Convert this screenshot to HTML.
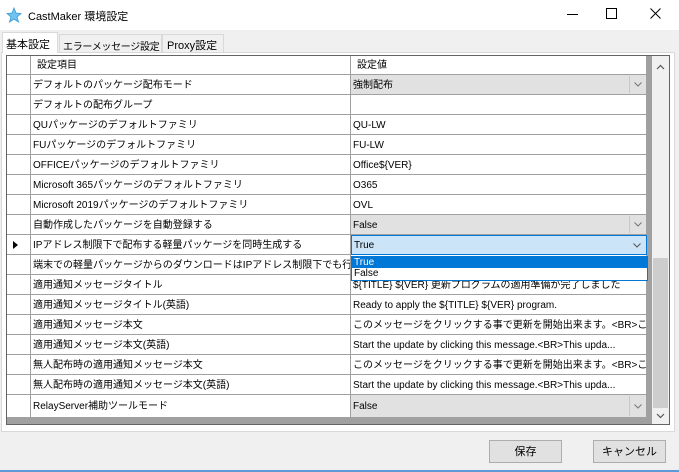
<!DOCTYPE html>
<html><head><meta charset="utf-8"><style>
*{margin:0;padding:0;box-sizing:border-box}
body{width:679px;height:472px;background:#f0f0f0;font-family:"Liberation Sans","Noto Sans CJK JP",sans-serif;font-size:10px;color:#000;position:relative;overflow:hidden}
.a{position:absolute}
.title{left:0;top:0;width:679px;height:30px;background:#fff}
.row{position:absolute;left:31px;width:616px;height:20px}
.c1,.c2{position:absolute;top:0;height:20px;line-height:21px;background:#fff;border-bottom:1px solid #a0a0a0;border-right:1px solid #a0a0a0;padding-left:2px;white-space:nowrap;overflow:hidden}
.c1{left:0;width:320px}
.c2{left:320px;width:296px}
.rh{position:absolute;left:7px;width:24px;height:20px;background:#fff;border-bottom:1px solid #a0a0a0;border-right:1px solid #a0a0a0}
.cb{background:#e1e1e1}
.arr{position:absolute;right:1px;top:1px;width:16px;height:17px;border-left:1px solid #c8c8c8}
.arr svg{position:absolute;left:4px;top:6px}
.btn{position:absolute;top:440px;height:23px;background:#e1e1e1;border:1px solid #adadad;text-align:center;line-height:22px;font-size:11px}
</style></head><body>
<div class="a title"></div>
<svg class="a" style="left:6px;top:7px" width="16" height="16" viewBox="0 0 16 16"><polygon points="8,1 10,6 15,6.5 11,10 12.5,15 8,12 3.5,15 5,10 1,6.5 6,6" fill="#6ec3f0" stroke="#3a9ad8" stroke-width="0.8"/></svg>
<div class="a" style="left:28px;top:8px;font-size:11px">CastMaker 環境設定</div>
<div class="a" style="left:567px;top:14px;width:11px;height:1px;background:#000"></div>
<div class="a" style="left:606px;top:8px;width:11px;height:11px;border:1px solid #000"></div>
<svg class="a" style="left:650px;top:8px" width="11" height="11" viewBox="0 0 11 11"><path d="M0.5 0.5L10.5 10.5M10.5 0.5L0.5 10.5" stroke="#000" stroke-width="1"/></svg>
<div class="a" style="left:1px;top:52px;width:674px;height:380px;background:#fff;border:1px solid #d9d9d9"></div>
<div class="a" style="left:2px;top:32px;width:56px;height:21px;background:#fff;border:1px solid #d9d9d9;border-bottom:none;font-size:11px;padding:3px 0 0 3px;white-space:nowrap">基本設定</div>
<div class="a" style="left:59px;top:34px;width:103px;height:18px;border:1px solid #d9d9d9;border-bottom:none;font-size:10px;letter-spacing:-0.3px;padding:3px 0 0 3px;white-space:nowrap;overflow:hidden">エラーメッセージ設定</div>
<div class="a" style="left:162px;top:34px;width:62px;height:18px;border:1px solid #d9d9d9;border-bottom:none;font-size:11px;padding:2px 0 0 4px;white-space:nowrap">Proxy設定</div>
<div class="a" style="left:6px;top:55px;width:664px;height:370px;background:#a0a0a0;border:1px solid #646464"></div>
<div class="a" style="left:652px;top:56px;width:17px;height:368px;background:#f0f0f0"></div>
<div class="a" style="left:653px;top:258px;width:15px;height:150px;background:#cdcdcd"></div>
<svg class="a" style="left:656px;top:64px" width="9" height="6"><path d="M1 5L4.5 1.5L8 5" stroke="#555" fill="none" stroke-width="1.2"/></svg>
<svg class="a" style="left:656px;top:413px" width="9" height="6"><path d="M1 1L4.5 4.5L8 1" stroke="#555" fill="none" stroke-width="1.2"/></svg>
<div class="rh" style="top:56px;height:19px"></div>
<div class="row" style="top:56px;height:19px"><div class="c1" style="height:19px;padding-left:6px;line-height:19px">設定項目</div><div class="c2" style="height:19px;padding-left:6px;line-height:19px">設定値</div></div>
<div class="rh" style="top:75px"></div><div class="row" style="top:75px"><div class="c1">デフォルトのパッケージ配布モード</div><div class="c2 cb">強制配布<div class="arr"><svg width="8" height="5"><path d="M0.5 0.5L4 4L7.5 0.5" stroke="#777" fill="none"/></svg></div></div></div>
<div class="rh" style="top:95px"></div><div class="row" style="top:95px"><div class="c1">デフォルトの配布グループ</div><div class="c2"></div></div>
<div class="rh" style="top:115px"></div><div class="row" style="top:115px"><div class="c1">QUパッケージのデフォルトファミリ</div><div class="c2">QU-LW</div></div>
<div class="rh" style="top:135px"></div><div class="row" style="top:135px"><div class="c1">FUパッケージのデフォルトファミリ</div><div class="c2">FU-LW</div></div>
<div class="rh" style="top:155px"></div><div class="row" style="top:155px"><div class="c1">OFFICEパッケージのデフォルトファミリ</div><div class="c2">Office${VER}</div></div>
<div class="rh" style="top:175px"></div><div class="row" style="top:175px"><div class="c1">Microsoft 365パッケージのデフォルトファミリ</div><div class="c2">O365</div></div>
<div class="rh" style="top:195px"></div><div class="row" style="top:195px"><div class="c1">Microsoft 2019パッケージのデフォルトファミリ</div><div class="c2">OVL</div></div>
<div class="rh" style="top:215px"></div><div class="row" style="top:215px"><div class="c1">自動作成したパッケージを自動登録する</div><div class="c2 cb">False<div class="arr"><svg width="8" height="5"><path d="M0.5 0.5L4 4L7.5 0.5" stroke="#777" fill="none"/></svg></div></div></div>
<div class="rh" style="top:235px"><span style="position:absolute;left:6px;top:6px;width:0;height:0;border-left:5px solid #000;border-top:4px solid transparent;border-bottom:4px solid transparent"></span></div><div class="row" style="top:235px"><div class="c1">IPアドレス制限下で配布する軽量パッケージを同時生成する</div><div class="c2" style="background:#cce4f7;border:1px solid #0078d7;line-height:19px">True<div class="arr" style="border:none"><svg width="8" height="5"><path d="M0.5 0.5L4 4L7.5 0.5" stroke="#555" fill="none"/></svg></div></div></div>
<div class="rh" style="top:255px"></div><div class="row" style="top:255px"><div class="c1">端末での軽量パッケージからのダウンロードはIPアドレス制限下でも行う</div><div class="c2"></div></div>
<div class="rh" style="top:275px"></div><div class="row" style="top:275px"><div class="c1">適用通知メッセージタイトル</div><div class="c2">${TITLE} ${VER} 更新プログラムの適用準備が完了しました</div></div>
<div class="rh" style="top:295px"></div><div class="row" style="top:295px"><div class="c1">適用通知メッセージタイトル(英語)</div><div class="c2">Ready to apply the ${TITLE} ${VER} program.</div></div>
<div class="rh" style="top:315px"></div><div class="row" style="top:315px"><div class="c1">適用通知メッセージ本文</div><div class="c2">このメッセージをクリックする事で更新を開始出来ます。&lt;BR&gt;こ...</div></div>
<div class="rh" style="top:335px"></div><div class="row" style="top:335px"><div class="c1">適用通知メッセージ本文(英語)</div><div class="c2">Start the update by clicking this message.&lt;BR&gt;This upda...</div></div>
<div class="rh" style="top:355px"></div><div class="row" style="top:355px"><div class="c1">無人配布時の適用通知メッセージ本文</div><div class="c2">このメッセージをクリックする事で更新を開始出来ます。&lt;BR&gt;こ...</div></div>
<div class="rh" style="top:375px"></div><div class="row" style="top:375px"><div class="c1">無人配布時の適用通知メッセージ本文(英語)</div><div class="c2">Start the update by clicking this message.&lt;BR&gt;This upda...</div></div>
<div class="rh" style="top:395px;height:23px"></div><div class="row" style="top:395px;height:23px"><div class="c1" style="height:23px;line-height:24px">RelayServer補助ツールモード</div><div class="c2 cb" style="height:23px;line-height:24px">False<div class="arr" style="height:20px"><svg width="8" height="5" style="top:8px"><path d="M0.5 0.5L4 4L7.5 0.5" stroke="#777" fill="none"/></svg></div></div></div>
<div class="a" style="left:351px;top:256px;width:297px;height:25px;background:#fff;border:1px solid #0078d7"></div>
<div class="a" style="left:352px;top:257px;width:295px;height:11px;background:#0078d7;color:#fff;line-height:12px;padding-left:2px">True</div>
<div class="a" style="left:352px;top:268px;width:295px;height:12px;line-height:12px;padding-left:2px">False</div>
<div class="btn" style="left:489px;width:73px">保存</div>
<div class="btn" style="left:593px;width:73px">キャンセル</div>
<div class="a" style="left:0;top:470px;width:679px;height:2px;background:#5d9ad8"></div>
</body></html>
